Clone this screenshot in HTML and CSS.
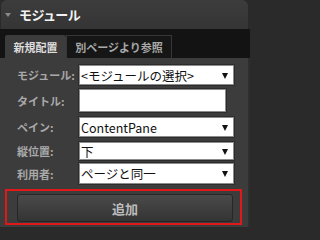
FILE: index.html
```html
<!DOCTYPE html>
<html lang="ja">
<head>
<meta charset="utf-8">
<link rel="stylesheet" href="styles.css">
</head>
<body>
<div class="panel">
  <div class="head"><span class="tri"></span><span class="title">モジュール</span></div>
  <div class="tabs">
    <div class="tab active">新規配置</div>
    <div class="tab">別ページより参照</div>
  </div>
  <div class="content">
    <div class="row r1"><span class="lbl">モジュール:</span><div class="sel"><span class="val">&lt;モジュールの選択&gt;</span><span class="arr"></span></div></div>
    <div class="row r2"><span class="lbl">タイトル:</span><div class="inp"></div></div>
    <div class="row r3"><span class="lbl">ペイン:</span><div class="sel"><span class="val">ContentPane</span><span class="arr"></span></div></div>
    <div class="row r4"><span class="lbl">縦位置:</span><div class="sel"><span class="val">下</span><span class="arr"></span></div></div>
    <div class="row r5"><span class="lbl">利用者:</span><div class="sel"><span class="val">ページと同一</span><span class="arr"></span></div></div>
    <div class="focus"><div class="btn">追加</div></div>
  </div>
</div>
</body>
</html>
```

FILE: styles.css
```css
html, body {
  margin: 0;
  padding: 0;
}
body {
  width: 250px;
  height: 227px;
  overflow: hidden;
  background: #2a2a2a;
  font-family: "Noto Sans CJK JP", "Noto Sans", sans-serif;
}
.panel {
  margin: 0 2px 0 1px;
  height: 227px;
  display: flex;
  flex-direction: column;
}
.head {
  height: 29px;
  background: linear-gradient(#3c3c3c, #353535);
  border-radius: 6px 6px 0 0;
  display: flex;
  align-items: center;
  padding-left: 4px;
  box-sizing: border-box;
}
.tri {
  width: 0;
  height: 0;
  border-left: 3px solid transparent;
  border-right: 3px solid transparent;
  border-top: 4px solid #8a8a8a;
  margin-right: 8px;
  margin-top: 1px;
}
.title {
  color: #f2f2f2;
  font-weight: bold;
  font-size: 13px;
  line-height: 16px;
  letter-spacing: -0.6px;
}
.tabs {
  height: 29px;
  background: #131313;
  margin: 0 -2px 0 -1px;
  padding: 6px 0 0 5px;
  box-sizing: border-box;
  display: flex;
  align-items: stretch;
}
.tab {
  font-size: 11px;
  font-weight: bold;
  color: #a8a8a8;
  display: flex;
  align-items: center;
  justify-content: center;
  box-sizing: border-box;
}
.tab.active {
  width: 61px;
  background: #3c3c3c;
  color: #dcdcdc;
  border-radius: 2px 2px 0 0;
}
.tab:not(.active) {
  width: 106px;
  background: #161616;
  border: 1px solid #363636;
  border-bottom: none;
}
.content {
  flex: 1;
  background: #3c3c3c;
  margin: 0 -2px 0 -1px;
  padding: 7px 0 0 17px;
  box-sizing: border-box;
  border-right: 2px solid #2e2e2e;
}
.row {
  display: flex;
  align-items: center;
  height: 20px;
  margin-bottom: 4px;
}
.row.r2 { height: 23px; margin-bottom: 5px; }
.row.r3 { margin-bottom: 5px; }
.row.r4 { height: 18px; margin-bottom: 3px; }
.row.r5 { height: 21px; }
.lbl {
  width: 62px;
  color: #a9a9a9;
  font-size: 11px;
  font-weight: bold;
  white-space: nowrap;
}
.sel, .inp {
  height: 100%;
  box-sizing: border-box;
  background: #fff;
  border: 1px solid #8c8c8c;
  box-shadow: 0 0 0 1px #2c2c2c;
}
.sel {
  width: 155px;
  display: flex;
  align-items: center;
  justify-content: space-between;
  padding: 0 5px 0 1px;
}
.inp {
  width: 147px;
}
.val {
  color: #111;
  font-size: 12.5px;
  white-space: nowrap;
}
.arr {
  width: 0;
  height: 0;
  border-left: 3px solid transparent;
  border-right: 3px solid transparent;
  border-top: 6px solid #111;
  margin-top: 1px;
}
.focus {
  margin: 5px 0 0 -12px;
  width: 237px;
  height: 36px;
  box-sizing: border-box;
  border: 2px solid #e01818;
  padding: 3px 7px 1px 10px;
}
.btn {
  height: 100%;
  box-sizing: border-box;
  border: 1px solid #262626;
  border-radius: 3px;
  background: linear-gradient(#4a4a4a, #343434);
  color: #bdbdbd;
  font-size: 13px;
  font-weight: bold;
  display: flex;
  align-items: center;
  justify-content: center;
}
```
